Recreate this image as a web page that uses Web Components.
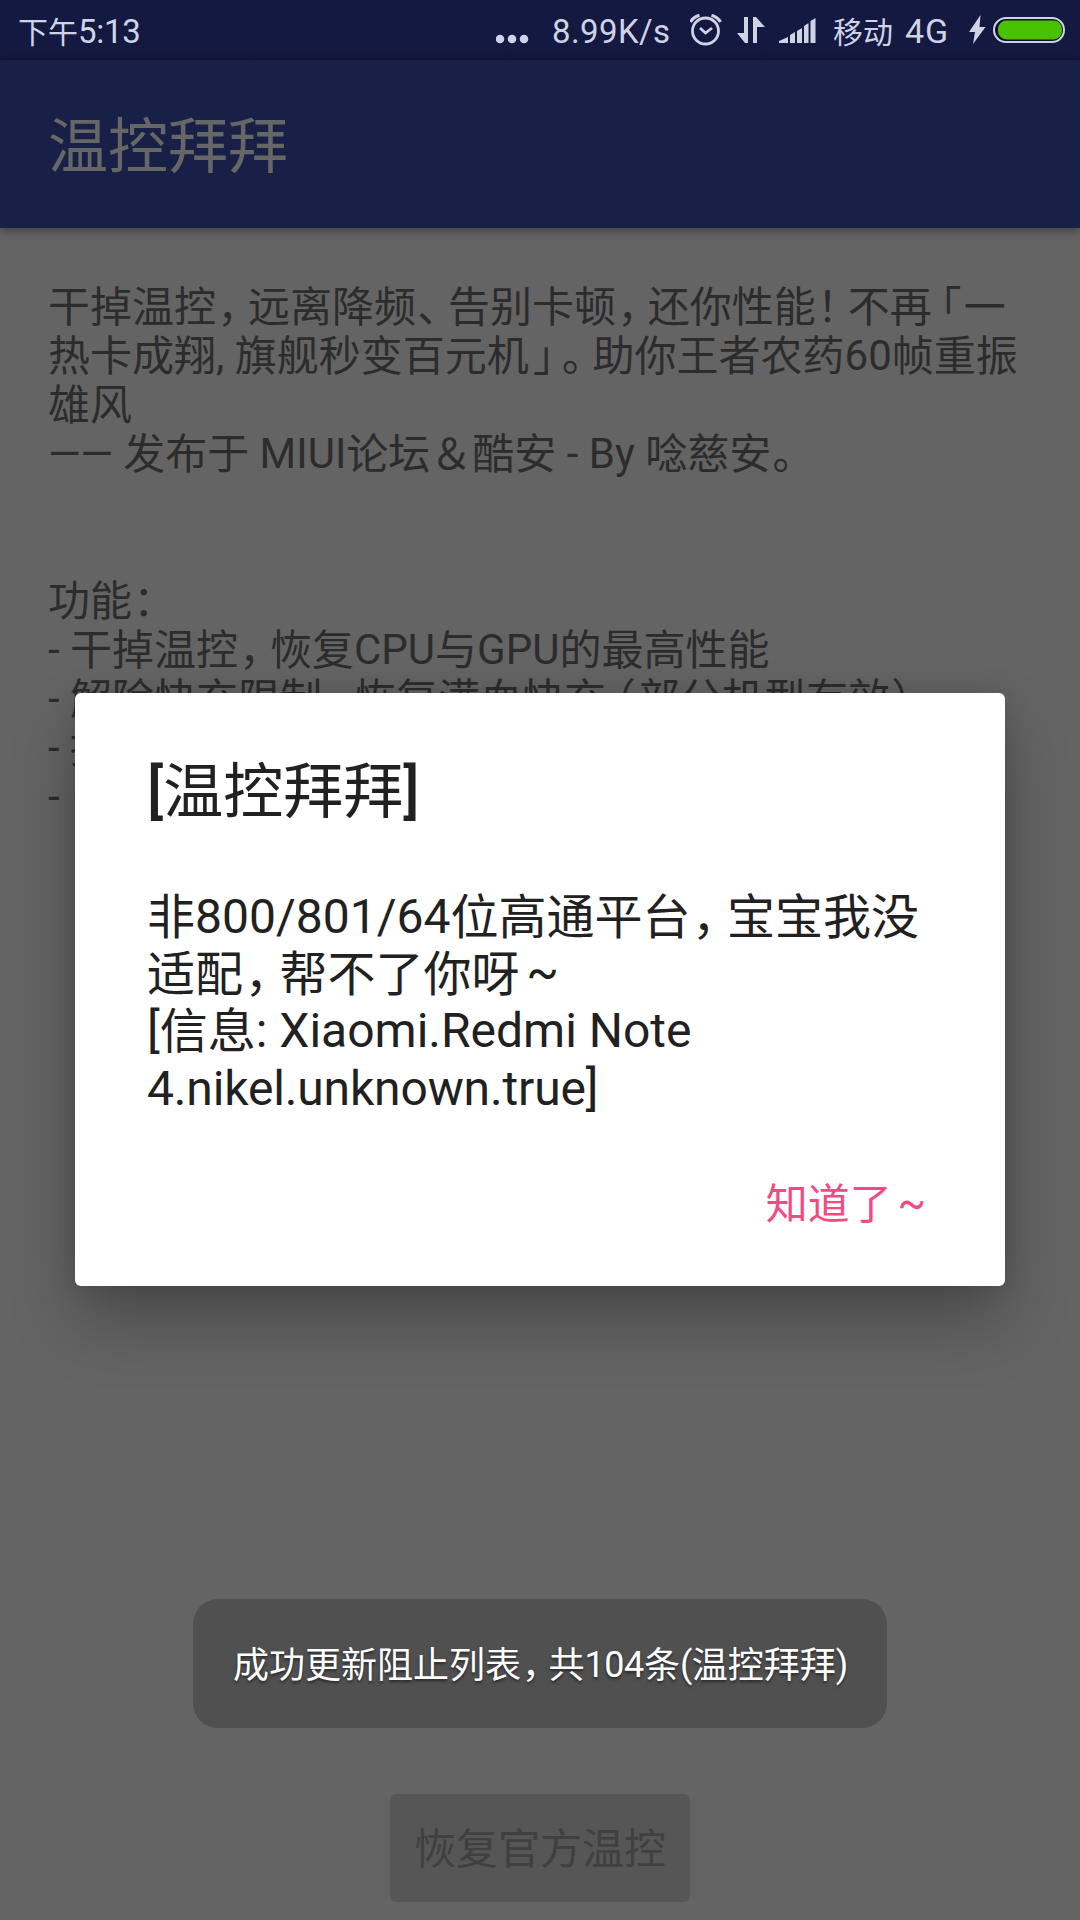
<!DOCTYPE html>
<html lang="zh-CN">
<head>
<meta charset="utf-8">
<title>温控拜拜</title>
<style>
html,body{margin:0;padding:0;background:#646464}
body{width:1080px;height:1920px;overflow:hidden;font-family:Roboto,"Noto Sans CJK SC",sans-serif}
</style>
</head>
<body>
<phone-screen>
  <status-bar slot="status"></status-bar>
  <app-bar slot="bar"><text-line text="温控拜拜"></text-line></app-bar>
  <intro-text>
    <text-line text="干掉温控，远离降频、告别卡顿，还你性能！不再「一"></text-line>
    <text-line text="热卡成翔, 旗舰秒变百元机」。助你王者农药60帧重振"></text-line>
    <text-line text="雄风"></text-line>
    <text-line text="—— 发布于 MIUI论坛＆酷安 - By 唸慈安。"></text-line>
    <text-line text=""></text-line>
    <text-line text=""></text-line>
    <text-line text="功能："></text-line>
    <text-line text="- 干掉温控，恢复CPU与GPU的最高性能"></text-line>
    <text-line text="- 解除快充限制，恢复满血快充（部分机型有效）"></text-line>
    <text-line text="- 提"></text-line>
    <text-line text="-"></text-line>
  </intro-text>
  <disabled-button><text-line text="恢复官方温控"></text-line></disabled-button>
  <toast-message slot="overlay"><text-line text="成功更新阻止列表，共104条(温控拜拜)"></text-line></toast-message>
  <alert-dialog slot="overlay">
    <text-line slot="title" text="[温控拜拜]"></text-line>
    <text-line text="非800/801/64位高通平台，宝宝我没"></text-line>
    <text-line text="适配，帮不了你呀～"></text-line>
    <text-line text="[信息: Xiaomi.Redmi Note"></text-line>
    <text-line style="--latin-spacing:-.15px" text="4.nikel.unknown.true]"></text-line>
    <text-line slot="action" text="知道了～"></text-line>
  </alert-dialog>
</phone-screen>
<script>
function define(name, html, setup) {
  const template = document.createElement('template');
  template.innerHTML = html;
  customElements.define(name, class extends HTMLElement {
    constructor() {
      super();
      this.attachShadow({mode: 'open'}).appendChild(template.content.cloneNode(true));
    }
    connectedCallback() { if (setup) setup(this, this.shadowRoot); }
  });
}

/* One unwrapped line of mixed Chinese and Latin text with narrow punctuation. */
define('text-line', `<style>
:host{display:block;white-space:pre;text-spacing-trim:space-all;text-autospace:no-autospace}
span{line-height:0}
.latin{vertical-align:.02em;font-weight:var(--latin-weight,400);letter-spacing:var(--latin-spacing,0)}
.after,.before,.close{font-feature-settings:"halt" 1}
.after{margin-left:.03em;margin-right:.23em}
.before{margin-left:.21em;margin-right:.05em}
.close{margin-left:.1em;margin-right:.16em}
.dash{letter-spacing:-.01em}
.wave{display:inline-block;width:.77em;text-indent:.14em;vertical-align:.05em}
</style><div></div>`, (host, root) => {
  const line = root.querySelector('div');
  line.textContent = '';
  for (const run of host.getAttribute('text').match(/[「（]|[，、！」。：）]|—+|～|[\x20-\x7e]+|[^「（，、！」。：）—～\x20-\x7e]+/g) || ['\u00a0']) {
    const span = document.createElement('span');
    span.textContent = run;
    if (/[「（]/.test(run)) span.className = 'before';
    else if (run === '」') span.className = 'close';
    else if (/[，、！。：）]/.test(run)) span.className = 'after';
    else if (/—/.test(run)) span.className = 'dash';
    else if (run === '～') { span.className = 'wave'; span.textContent = '~'; }
    else if (/[\x20-\x7e]/.test(run)) span.className = 'latin';
    line.append(span);
  }
});

define('phone-screen', `<style>
:host{display:flex;flex-direction:column;position:relative;width:1080px;height:1920px;overflow:hidden;background:#646464}
main{flex:1;display:flex;flex-direction:column;justify-content:space-between;padding:55px 48px 18px}
</style><slot name="status"></slot><slot name="bar"></slot><main><slot></slot></main><slot name="overlay"></slot>`);

define('status-bar', `<style>
:host{display:flex;align-items:center;height:60px;box-sizing:border-box;padding:2px 15px 0 18px;background:linear-gradient(#131940 50px,#10153a 60px);color:#d0d3e6;font-size:33px;line-height:58px}
.time{flex:1;display:flex}
.time text-line:first-child,.op{font-size:30px}
.time text-line:last-child{--latin-spacing:-.3px}
.rate{--latin-spacing:.4px}
.net{font-size:34px;--latin-spacing:.8px}
text-line{padding-top:3px;line-height:57px}
svg{display:block;flex:none}
</style>
<div class="time"><text-line text="下午"></text-line><text-line text="5:13"></text-line></div>
<svg width="34" height="60" viewBox="0 0 34 60" fill="#d0d3e6"><circle cx="4" cy="38" r="4.300"/><circle cx="16" cy="38" r="4.300"/><circle cx="28" cy="38" r="4.300"/></svg>
<text-line class="rate" style="width:118px;margin-left:22px" text="8.99K/s"></text-line>
<svg style="margin-left:20px" width="32" height="60" viewBox="0 0 32 60" fill="none" stroke="#d0d3e6"><circle cx="15.500" cy="30" r="13" stroke-width="2.800"/><path d="M10 27l5.500 5 6.500-5" stroke-width="2.800"/><path d="M.5 21Q3.500 16 9.500 14.300M21.500 14.300Q27.500 16 30.500 21" stroke-width="3.200"/></svg>
<svg style="margin-left:15px" width="28" height="60" viewBox="0 0 28 60" fill="#d0d3e6"><path d="M7 16h4v26h-3L0 32h7zM16 42V16h3l9 10h-8v16z"/></svg>
<svg style="margin-left:14px" width="38" height="60" viewBox="0 0 38 60" fill="#d0d3e6"><path d="M0 42v-2l9-4v6zM11 42V34l5-3v11zM18 42V30l5-3v15zM25 42V25l4.500-3v20zM31.500 42V20l5-3v25z"/></svg>
<text-line class="op" style="width:60px;margin-left:16px" text="移动"></text-line>
<text-line class="net" style="width:46px;margin-left:12px" text="4G"></text-line>
<svg style="margin-left:18px" width="17" height="60" viewBox="0 0 17 60" fill="#d0d3e6"><path d="M11.500 14L0 31h6L4 43 16.500 26h-6z"/></svg>
<svg style="margin-left:7px" width="72" height="60" viewBox="0 0 72 60"><rect x="1" y="17" width="70" height="24" rx="12" fill="#0c122d" stroke="#d0d3e6" stroke-width="2"/><rect x="5" y="19.500" width="64" height="19" rx="8.500" fill="#48c100"/></svg>
`);

define('app-bar', `<style>
:host{display:flex;align-items:center;flex:none;height:168px;box-sizing:border-box;padding:7px 48px 0;background:#192048;color:#666;font-size:60px;line-height:70px;box-shadow:0 3px 9px rgba(0,0,0,.36)}
</style><slot></slot>`);

define('intro-text', `<style>
:host{display:block;font-size:42px;line-height:49px;color:#2c2c2c}
</style><slot></slot>`);

define('disabled-button', `<style>
:host{display:flex;align-self:center;align-items:center;justify-content:center;width:300px;height:108px;box-sizing:border-box;padding-top:2px;border-radius:6px;background:#565656;color:#404040;font-size:42px;line-height:49px}
</style><slot></slot>`);

define('toast-message', `<style>
:host{position:absolute;left:193px;top:1599px;width:694px;height:129px;box-sizing:border-box;padding:4px 0 0 40px;display:flex;align-items:center;border-radius:25px;background:#505050;color:#fff;font-size:36px;line-height:44px;text-shadow:0 2px 3px rgba(0,0,0,.5);--latin-spacing:-.4px}
</style><slot></slot>`);

define('alert-dialog', `<style>
:host{position:absolute;left:75px;top:693px;width:930px;height:593px;box-sizing:border-box;padding:64px 81px 55px 72px;display:flex;flex-direction:column;border-radius:6px;background:#fff;color:#212121;box-shadow:0 36px 64px rgba(0,0,0,.25),0 0 26px rgba(0,0,0,.13)}
h2{margin:0;font-size:60px;line-height:72px;font-weight:400;--latin-weight:500}
.body{margin-top:60px;font-size:48px;line-height:57.200px}
.action{margin-top:auto;align-self:flex-end;font-size:42px;line-height:52px;color:#f34a83}
</style><h2><slot name="title"></slot></h2><div class="body"><slot></slot></div><div class="action"><slot name="action"></slot></div>`);
</script>
</body>
</html>
